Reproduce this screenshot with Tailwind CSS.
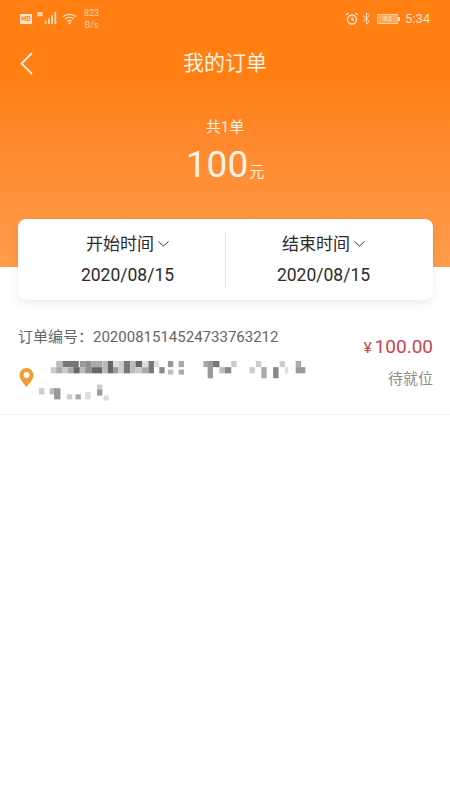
<!DOCTYPE html>
<html lang="zh-CN">
<head>
    <meta charset="UTF-8">
    <title>我的订单</title>
    <script src="https://cdn.jsdelivr.net/npm/@tailwindcss/browser@4"></script>
</head>
<body class="bg-white min-h-screen font-['Roboto','Noto_Sans_CJK_SC',sans-serif]">
    <!-- 顶部 -->
    <header class="h-[267px] bg-gradient-to-b from-[#ff7f13] from-30% to-[#ff9c4b] text-white">
        <!-- 状态栏 -->
        <div class="h-[31px] flex items-center justify-between pl-5 pr-5 pt-[6px] text-[#ffe6cc]">
            <div class="flex items-center gap-[5px]">
                <span class="w-3 h-[10px] rounded-[1px] bg-[#ffe6cc] text-[#ff7f13] text-[7px] font-bold leading-[10px] text-center">HD</span>
                <svg width="20" height="13" viewBox="0 0 18 12" fill="currentColor">
                    <rect x="0" y="0" width="5" height="4" opacity=".8"/>
                    <rect x="7" y="8" width="1.5" height="3"/>
                    <rect x="10" y="6" width="1.5" height="5"/>
                    <rect x="13" y="3" width="1.5" height="8"/>
                    <rect x="16" y="0" width="1.5" height="11"/>
                </svg>
                <svg width="15" height="13" viewBox="0 0 17 13" fill="none" stroke="currentColor" stroke-width="1.4">
                    <path d="M1 4.500C5 .8 12 .8 16 4.500"/>
                    <path d="M3.500 7c2.800-2.400 7.200-2.400 10 0"/>
                    <path d="M6 9.500c1.500-1.200 3.500-1.200 5 0"/>
                    <circle cx="8.500" cy="11.500" r=".6"/>
                </svg>
                <div class="text-[9px] leading-[12px] text-center opacity-80 ml-[2px]">823<br>B/s</div>
            </div>
            <div class="flex items-center">
                <svg width="14" height="14" viewBox="0 0 14 14" fill="none" stroke="currentColor" stroke-width="1.400">
                    <circle cx="7" cy="7.500" r="4.500"/>
                    <path d="M7 5v3h2M1 3l2.500-2M13 3l-2.500-2"/>
                </svg>
                <svg class="ml-[3px]" width="9" height="13" viewBox="0 0 9 13" fill="none" stroke="currentColor" stroke-width="1">
                    <path d="M1 3.500l6.500 6L4.500 12V1l3 2.500L1 9.500"/>
                </svg>
                <div class="ml-[6px] flex items-center">
                    <span class="w-[21px] h-[10px] border border-[#ffe6cc]/60 bg-[#ffe6cc]/40 text-[8px] leading-2 text-center">82</span>
                    <span class="w-[2px] h-1 bg-[#ffe6cc]"></span>
                </div>
                <span class="ml-[5px] text-[13px] leading-none">5:34</span>
            </div>
        </div>

        <!-- 标题 -->
        <div class="relative mt-[8px] h-[50px] flex items-center justify-center">
            <svg class="absolute left-5 top-[13px]" width="13" height="23" viewBox="0 0 13 23" fill="none" stroke="#fff0e0" stroke-width="1.800">
                <path d="M12 1L1.500 11.500 12 22"/>
            </svg>
            <h1 class="text-[21px] text-[#fff3e6]">我的订单</h1>
        </div>

        <!-- 合计 -->
        <div class="mt-[28px] text-center text-[#fff3e6]">
            <p class="text-[15px] leading-5">共1单</p>
            <p class="mt-[6px] leading-[44px]"><span class="text-[37px]">100</span><span class="text-[15px] ml-[1px]">元</span></p>
        </div>
    </header>

    <!-- 时间选择 -->
    <section class="relative mx-[18px] w-[415px] h-[81px] -mt-[48px] bg-white rounded-lg shadow-[0_3px_10px_rgba(0,0,0,0.08)] flex items-center text-[#2b2b2b]">
        <div class="flex-1 text-center pl-[12px]">
            <div class="flex items-center justify-center gap-[4px] text-[17px] leading-6">
                开始时间
                <svg width="11" height="6" viewBox="0 0 11 6" fill="none" stroke="#333" stroke-width="1"><path d="M.5.500l5 4.500 5-4.500"/></svg>
            </div>
            <p class="mt-[7px] text-[17.500px] leading-6">2020/08/15</p>
        </div>
        <div class="w-px h-[56px] bg-[#e8e8e8]"></div>
        <div class="flex-1 text-center pr-[12px]">
            <div class="flex items-center justify-center gap-[4px] text-[17px] leading-6">
                结束时间
                <svg width="11" height="6" viewBox="0 0 11 6" fill="none" stroke="#333" stroke-width="1"><path d="M.5.500l5 4.500 5-4.500"/></svg>
            </div>
            <p class="mt-[7px] text-[17.500px] leading-6">2020/08/15</p>
        </div>
    </section>

    <!-- 订单 -->
    <section class="relative h-[115px] border-b border-[#f0f0f0] pl-[18px] pr-[17px]">
        <p class="pt-[27px] text-[15px] leading-5 text-[#666]">订单编号：2020081514524733763212</p>
        <div class="mt-[9px] flex items-start gap-[5px]">
            <svg class="mt-[11px] shrink-0" width="17" height="22" viewBox="0 0 17 22">
                <path fill-rule="evenodd" fill="#f39a32" d="M8.500 1a7 7 0 0 1 7 7c0 4.500-4.500 9-7 12-2.500-3-7-7.500-7-12a7 7 0 0 1 7-7zm0 4a3 3 0 1 0 0 6 3 3 0 0 0 0-6z"/>
            </svg>
            <!-- 打码的地址 -->
            <svg width="290" height="52" viewBox="0 0 270 42" preserveAspectRatio="none" class="-ml-[1px]">
                <g fill="#8f8f8f">
                    <rect x="11" y="9" width="5" height="5" fill="#ccc"/><rect x="16" y="4" width="6" height="5" fill="#bbb"/><rect x="16" y="9" width="6" height="5" fill="#aaa"/>
                    <rect x="22" y="4" width="15" height="5" fill="#777"/><rect x="22" y="9" width="5" height="5" fill="#ccc"/><rect x="27" y="9" width="5" height="5" fill="#aaa"/>
                    <rect x="32" y="9" width="6" height="5" fill="#666"/><rect x="38" y="4" width="5" height="5" fill="#999"/><rect x="38" y="9" width="5" height="5" fill="#bbb"/>
                    <rect x="43" y="4" width="6" height="10"/><rect x="49" y="4" width="10" height="5" fill="#aaa"/><rect x="49" y="9" width="10" height="5" fill="#666"/>
                    <rect x="59" y="4" width="5" height="10" fill="#bbb"/><rect x="64" y="4" width="5" height="10" fill="#666"/><rect x="69" y="4" width="5" height="5" fill="#ddd"/><rect x="69" y="9" width="5" height="5" fill="#999"/>
                    <rect x="74" y="4" width="5" height="10" fill="#ccc"/><rect x="79" y="4" width="6" height="10" fill="#777"/><rect x="85" y="4" width="5" height="10" fill="#bbb"/>
                    <rect x="90" y="4" width="6" height="5" fill="#666"/><rect x="90" y="9" width="6" height="5" fill="#ccc"/><rect x="96" y="9" width="6" height="5" fill="#aaa"/><rect x="96" y="4" width="6" height="5" fill="#ddd"/>
                    <rect x="102" y="4" width="5" height="10" fill="#777"/><rect x="107" y="4" width="5" height="5" fill="#ddd"/><rect x="112" y="9" width="5" height="5" fill="#888"/>
                    <rect x="120" y="4" width="5" height="5" fill="#999"/><rect x="120" y="11" width="5" height="4" fill="#bbb"/><rect x="130" y="4" width="5" height="5" fill="#aaa"/><rect x="130" y="11" width="5" height="4" fill="#aaa"/>
                    <rect x="153" y="4" width="8" height="5" fill="#aaa"/><rect x="157" y="4" width="5" height="14" fill="#999"/><rect x="162" y="4" width="6" height="5" fill="#777"/>
                    <rect x="168" y="9" width="5" height="5" fill="#bbb"/><rect x="173" y="9" width="6" height="5" fill="#888"/><rect x="179" y="4" width="5" height="5" fill="#ccc"/>
                    <rect x="196" y="9" width="5" height="5" fill="#ccc"/><rect x="202" y="4" width="5" height="5" fill="#ccc"/><rect x="207" y="9" width="5" height="9" fill="#aaa"/>
                    <rect x="218" y="9" width="5" height="9" fill="#888"/><rect x="224" y="4" width="5" height="5" fill="#ccc"/><rect x="229" y="9" width="3" height="5" fill="#ddd"/>
                    <rect x="239" y="4" width="5" height="5" fill="#aaa"/><rect x="239" y="9" width="9" height="5" fill="#999"/>
                    <rect x="0" y="26" width="5" height="5" fill="#ccc"/><rect x="10" y="26" width="5" height="5" fill="#bbb"/><rect x="14" y="26" width="6" height="9" fill="#999"/>
                    <rect x="26" y="31" width="5" height="4" fill="#ccc"/><rect x="34" y="31" width="5" height="4" fill="#aaa"/><rect x="43" y="29" width="5" height="6" fill="#ddd"/>
                    <rect x="54" y="23" width="5" height="4" fill="#ccc"/><rect x="54" y="27" width="5" height="5" fill="#999"/><rect x="60" y="32" width="5" height="4" fill="#ddd"/>
                </g>
            </svg>
        </div>
        <!-- 金额和状态 -->
        <div class="absolute right-[17px] top-[35px] text-right">
            <p class="text-[19px] leading-6 text-[#c9434a]"><span class="text-[15px] mr-[3px]">¥</span>100.00</p>
            <p class="mt-[9px] text-[15px] leading-5 text-[#8c8c8c]">待就位</p>
        </div>
    </section>
</body>
</html>
